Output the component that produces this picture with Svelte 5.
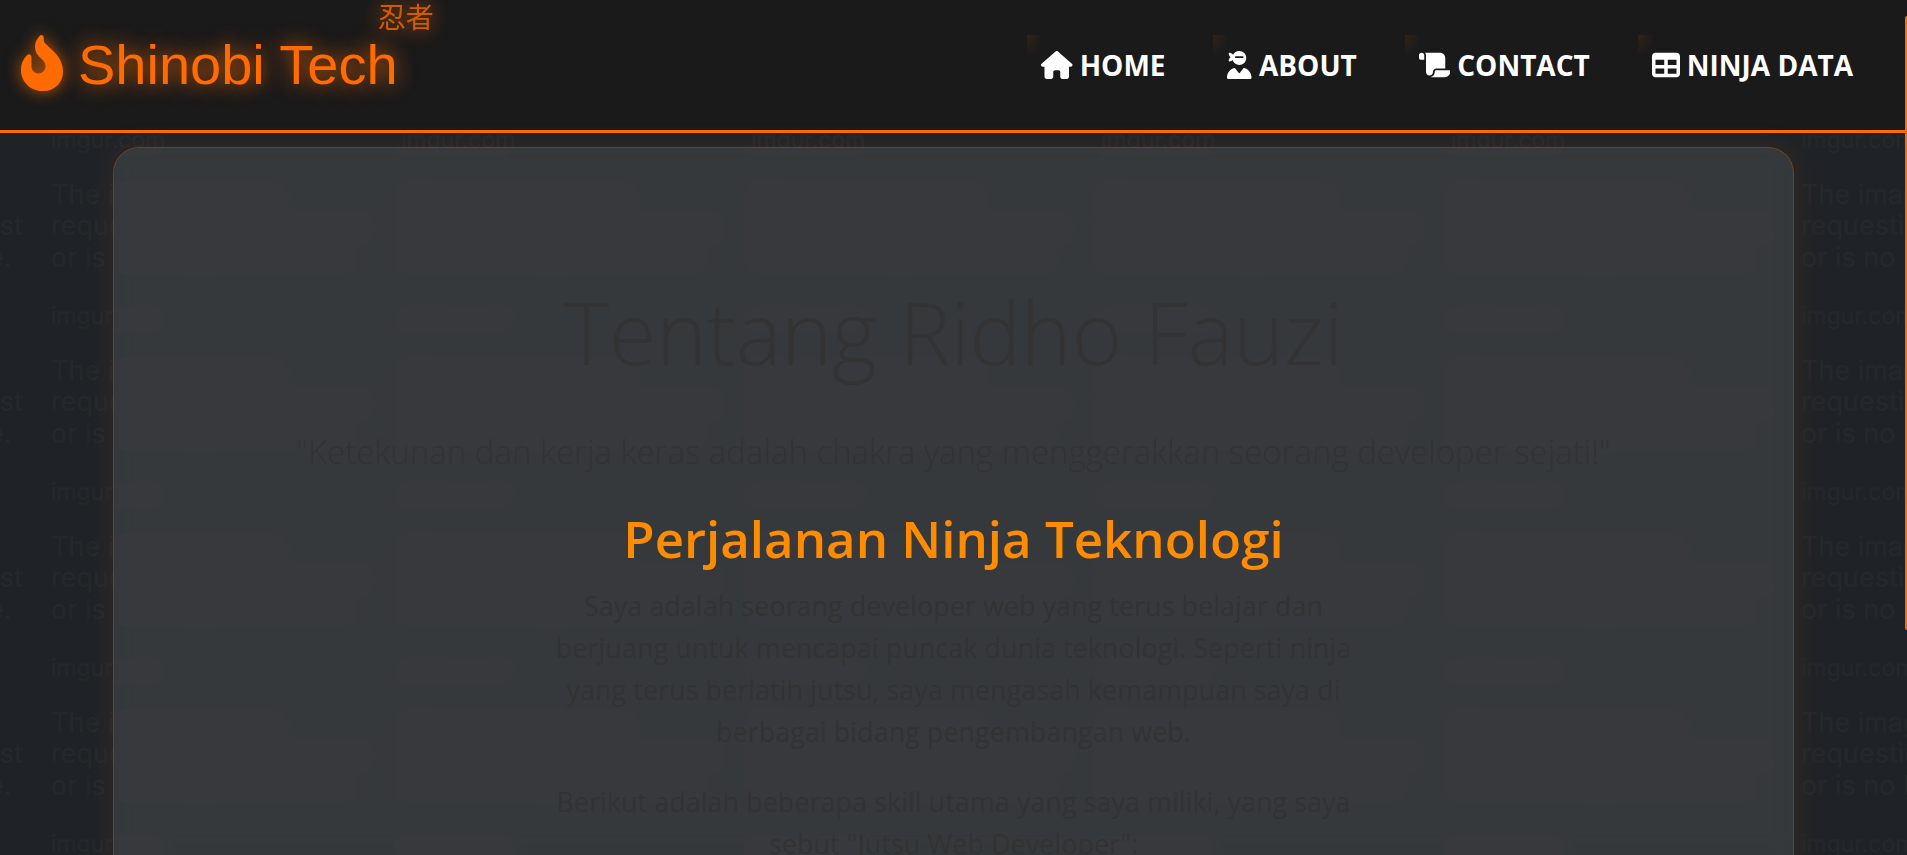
<script>
  const links = [
    { label: 'HOME', w: 576, d: 'M575.8 255.5c0 18-15 32.1-32 32.1h-32l.7 160.2c0 2.7-.2 5.4-.5 8.1V472c0 22.1-17.9 40-40 40H456c-1.1 0-2.2 0-3.3-.1c-1.4 .1-2.8 .1-4.2 .1H416 392c-22.1 0-40-17.9-40-40V448 384c0-17.7-14.3-32-32-32H256c-17.7 0-32 14.3-32 32v64 24c0 22.1-17.9 40-40 40H160 128.1c-1.5 0-3-.1-4.5-.2c-1.2 .1-2.4 .2-3.6 .2H104c-22.1 0-40-17.9-40-40V360c0-.9 0-1.9 .1-2.8V287.6H32c-18 0-32-14-32-32.1c0-9 3-17 10-24L266.4 8c7-7 15-8 22-8s15 2 21 7L564.8 231.5c8 7 12 15 11 24z' },
    { label: 'ABOUT', w: 448, d: 'M224 256c-57.2 0-105.6-37.5-122-89.3c-1.1 1.3-2.2 2.6-3.5 3.8c-15.8 15.5-38.8 20.7-53.6 22.1c-8.1 .8-14.6-5.7-13.8-13.8c1.4-14.7 6.6-37.8 22.1-53.6c5.8-5.9 12.6-10.1 19.6-13.4c-7-3.2-13.8-7.6-19.6-13.4C37.4 82.7 32.6 59.7 31.1 44.9c-.8-8.1 5.7-14.6 13.8-13.8c14.7 1.4 37.8 6.6 53.6 22.1c4.8 4.8 8.7 10.4 11.7 16.1C131.4 28.2 174.4 0 224 0c70.7 0 128 57.3 128 128s-57.3 128-128 128zM0 482.3C0 399.5 56.4 330 132.8 309.9c6-1.6 12.2 .9 15.9 5.8l62.5 83.3c6.4 8.5 19.2 8.5 25.6 0l62.5-83.3c3.7-4.9 9.9-7.4 15.9-5.8C391.6 330 448 399.5 448 482.3c0 16.4-13.3 29.7-29.7 29.7H29.7C13.3 512 0 498.7 0 482.3zM160 96c-8.8 0-16 7.2-16 16s7.2 16 16 16H288c8.8 0 16-7.2 16-16s-7.2-16-16-16H160z' },
    { label: 'CONTACT', w: 576, d: 'M0 80v48c0 17.7 14.3 32 32 32H48 96V80c0-26.5-21.5-48-48-48S0 53.5 0 80zM112 32c10 13.4 16 30 16 48V384c0 35.3 28.7 64 64 64s64-28.7 64-64v-5.3c0-32.4 26.3-58.7 58.7-58.7H480V128c0-53-43-96-96-96H112zM464 480c61.9 0 112-50.1 112-112c0-8.8-7.2-16-16-16H314.7c-14.7 0-26.7 11.9-26.7 26.7V384c0 53-43 96-96 96H368h96z' },
    { label: 'NINJA DATA', w: 512, d: 'M64 256V160H224v96H64zm0 64H224v96H64V320zm224 96V320H448v96H288zM448 256H288V160H448v96zM64 32C28.7 32 0 60.7 0 96V416c0 35.3 28.7 64 64 64H448c35.3 0 64-28.7 64-64V96c0-35.3-28.7-64-64-64H64z' }
  ];
</script>

<div class="page">
  <svg class="backdrop" aria-hidden="true">
    <defs>
      <pattern id="tile" x="28" y="0" width="350" height="176" patternUnits="userSpaceOnUse">
        <text x="23" y="28">The image you are</text>
        <text x="23" y="59">requesting does not exist</text>
        <text x="23" y="91">or is no longer available.</text>
        <text class="small" x="23" y="148">imgur.com</text>
      </pattern>
    </defs>
    <rect width="100%" height="100%" fill="url(#tile)" />
  </svg>

  <header>
    <a class="logo" href="#home">
      <svg viewBox="0 0 384 512" aria-hidden="true"><path d="M153.6 29.9l16-21.3C173.6 3.2 180 0 186.7 0C198.4 0 208 9.6 208 21.3V43.5c0 13.1 5.4 25.7 14.9 34.7L307.6 159C356.4 205.6 384 270.2 384 337.7C384 434 306 512 209.7 512H192C86 512 0 426 0 320v-3.8c0-48.8 19.4-95.6 53.9-130.1l3.5-3.5c4.2-4.2 10-6.6 16-6.6C85.9 176 96 186.1 96 198.6V288c0 35.3 28.7 64 64 64s64-28.7 64-64v-3.9c0-18-7.2-35.3-19.9-48l-38.6-38.6c-24-24-37.5-56.7-37.5-90.7c0-27.7 9-54.8 25.6-76.9z" /></svg>
      <span>Shinobi Tech</span>
      <span class="kanji" lang="ja">忍者</span>
    </a>
    <nav>
      {#each links as link}
        <a href="#{link.label.toLowerCase().replace(' ', '-')}">
          <svg viewBox="0 0 {link.w} 512" aria-hidden="true"><path d={link.d} /></svg>
          <span>{link.label}</span>
        </a>
      {/each}
    </nav>
  </header>

  <main>
    <svg class="frost" aria-hidden="true">
      <defs>
        <pattern id="haze" x="-86" y="-148" width="350" height="176" patternUnits="userSpaceOnUse">
          <g>
            <rect x="16" y="6" width="243" height="40" rx="14" />
            <rect x="16" y="36" width="330" height="34" rx="14" />
            <rect x="16" y="50" width="313" height="48" rx="14" />
            <rect x="16" y="132" width="120" height="24" rx="12" />
          </g>
        </pattern>
      </defs>
      <rect width="100%" height="100%" fill="url(#haze)" />
    </svg>
    <div class="content">
      <h1>Tentang Ridho Fauzi</h1>
      <p class="quote">"Ketekunan dan kerja keras adalah chakra yang menggerakkan seorang developer sejati!"</p>
      <h2>Perjalanan Ninja Teknologi</h2>
      <p class="body">
        Saya adalah seorang developer web yang terus belajar dan<br />
        berjuang untuk mencapai puncak dunia teknologi. Seperti ninja<br />
        yang terus berlatih jutsu, saya mengasah kemampuan saya di<br />
        berbagai bidang pengembangan web.
      </p>
      <p class="body">
        Berikut adalah beberapa skill utama yang saya miliki, yang saya<br />
        sebut "Jutsu Web Developer":
      </p>
    </div>
  </main>

  <div class="scroll-thumb" aria-hidden="true"></div>
</div>

<style>
  :global(body) {
    background: #1f2327;
  }
  .page {
    position: relative;
    height: 100vh;
    overflow: hidden;
    background: #1f2327;
    font-family: 'Open Sans', 'Noto Sans', sans-serif;
  }
  .backdrop {
    position: absolute;
    inset: 0;
    width: 100%;
    height: 100%;
  }
  .backdrop text {
    font: 27px Inter, sans-serif;
    fill: #24282b;
  }
  .backdrop .small {
    font-size: 23px;
  }
  header {
    position: relative;
    display: flex;
    align-items: center;
    justify-content: space-between;
    height: 130px;
    padding: 0 40px 0 21px;
    background: #1a1a1a;
    border-bottom: 3px solid #ff6b00;
  }
  .logo {
    position: relative;
    display: flex;
    align-items: center;
    gap: 15px;
    color: #ff6b00;
    font: 56px/64px 'Liberation Sans', Arial, sans-serif;
    text-decoration: none;
    text-shadow: 0 0 20px rgba(255, 107, 0, 0.9);
  }
  .logo svg {
    width: 42px;
    height: 56px;
    margin-bottom: 4px;
    fill: #ff6b00;
    filter: drop-shadow(0 0 8px rgba(255, 107, 0, 0.7));
  }
  .kanji {
    position: absolute;
    right: -36px;
    top: -33px;
    font: 28px/32px 'Noto Sans CJK JP', sans-serif;
    opacity: 0.8;
  }
  nav {
    display: flex;
    gap: 34px;
  }
  nav a {
    display: flex;
    align-items: center;
    gap: 7px;
    padding: 10px 14px;
    color: #fff;
    font-weight: 700;
    font-size: 28px;
    line-height: 40px;
    text-decoration: none;
    background: radial-gradient(ellipse 16px 22px at 0 0, rgba(255, 107, 0, 0.1), transparent);
  }
  nav svg {
    height: 28px;
    fill: #fff;
  }
  main {
    position: relative;
    min-height: 900px;
    margin: 14px 113px 0;
    overflow: hidden;
    border: 1px solid rgba(255, 107, 0, 0.24);
    border-radius: 26px;
    background: rgba(255, 255, 235, 0.1);
    backdrop-filter: blur(10px);
    box-shadow: 0 0 30px rgba(255, 107, 0, 0.1);
    color: #333;
    text-align: center;
  }
  .frost {
    position: absolute;
    inset: 0;
    width: 100%;
    height: 100%;
  }
  .frost g {
    fill: #38393c;
  }
  .content {
    position: relative;
    padding: 128px 32px 32px;
  }
  h1 {
    margin: 0;
    font-size: 86px;
    line-height: 112px;
    font-weight: 300;
  }
  .quote {
    margin: 40px 0 0;
    font-size: 33px;
    line-height: 48px;
    font-weight: 300;
  }
  h2 {
    margin: 30px 0 15px;
    color: #ff8c00;
    font-size: 51px;
    line-height: 64px;
    font-weight: 600;
  }
  .body {
    margin: 0 0 28px;
    font-size: 27px;
    line-height: 42px;
  }
  .scroll-thumb {
    position: absolute;
    top: 16px;
    right: 0;
    width: 2px;
    height: 614px;
    background: #ff6b00;
    border-radius: 2px 0 0 2px;
  }
</style>
